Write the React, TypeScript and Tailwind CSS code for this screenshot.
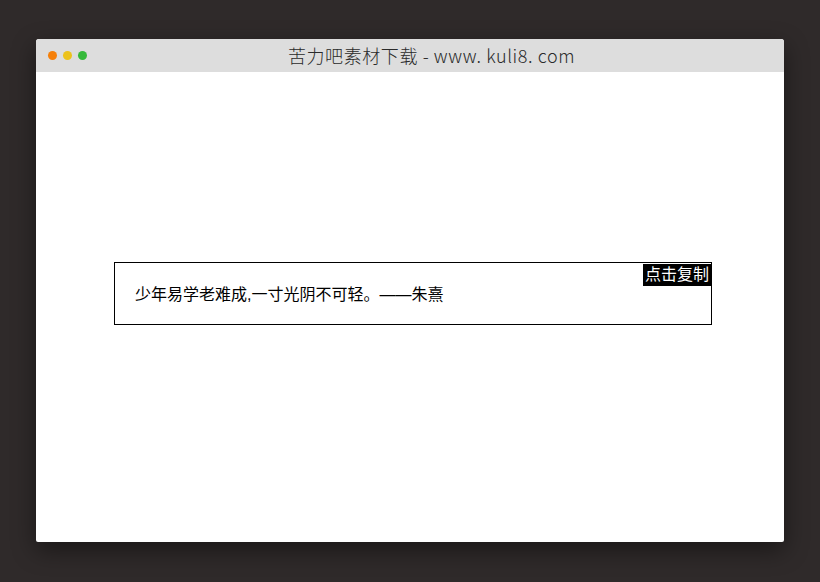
export default function App() {
  return (
    <div className="w-[820px] h-[582px] bg-[#2f2a2a] pt-[39px] pl-[36px]">
      <div className="w-[748px] h-[503px] bg-white rounded-t-[3px] rounded-b-[2px] shadow-[0_8px_24px_rgba(0,0,0,0.45)] flex flex-col overflow-hidden">
        {/* 标题栏 */}
        <div className="relative h-[33px] bg-[#dddddd] flex items-center justify-center shrink-0">
          <div className="absolute left-[12px] top-[12px] flex gap-[6px]">
            <span className="w-[9px] h-[9px] rounded-full bg-[#f5800a]" />
            <span className="w-[9px] h-[9px] rounded-full bg-[#ecc21c]" />
            <span className="w-[9px] h-[9px] rounded-full bg-[#35b93a]" />
          </div>
          <span className="text-[18px] text-[#2a2a2a] font-light tracking-[0.6px] font-['Noto_Sans_CJK_SC',sans-serif] leading-none -mt-[2px] ml-[43px]">
            苦力吧素材下载 - www. kuli8. com
          </span>
        </div>

        {/* 内容 */}
        <div className="flex-1">
          <div className="relative mt-[190px] ml-[78px] w-[598px] h-[63px] border border-black flex items-center pl-[20px] pt-[2px]">
            <p className="text-[16px] text-black font-['Liberation_Sans','Noto_Sans_CJK_SC',sans-serif]">
              少年易学老难成,一寸光阴不可轻。——朱熹
            </p>
            <button className="absolute top-[1px] right-0 h-[22px] px-[2px] bg-black text-white text-[16px] leading-[22px] font-['Liberation_Sans','Noto_Sans_CJK_SC',sans-serif]">
              点击复制
            </button>
          </div>
        </div>
      </div>
    </div>
  )
}
